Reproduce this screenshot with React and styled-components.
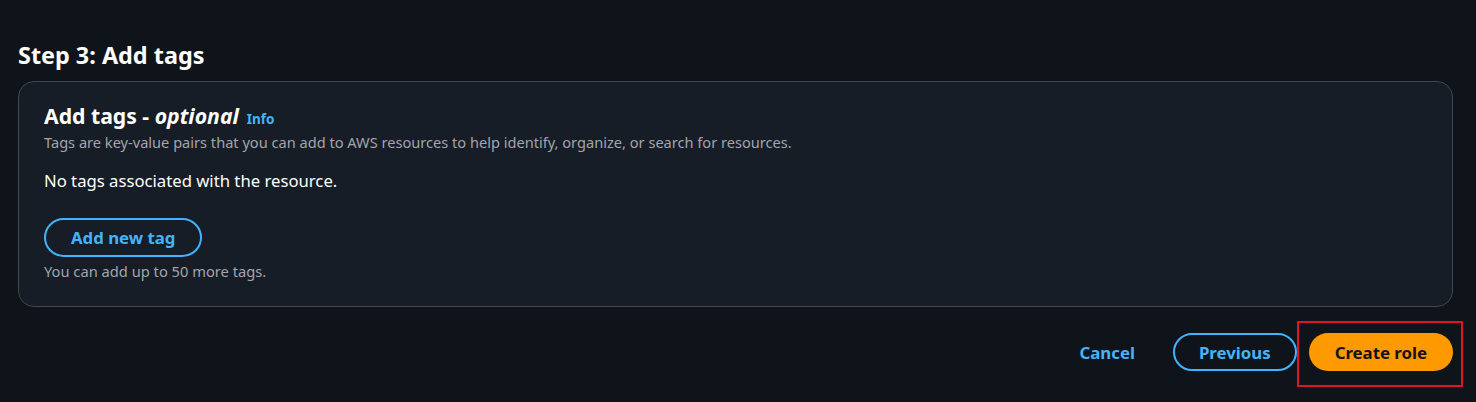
import React from "react";
import styled, { createGlobalStyle } from "styled-components";

const GlobalStyle = createGlobalStyle`
  html, body {
    margin: 0;
    padding: 0;
    background: #0f141a;
  }
  body {
    font-family: "Noto Sans", "Open Sans", Arial, sans-serif;
    color: #ffffff;
  }
`;

const Page = styled.div`
  width: 1476px;
  height: 402px;
  box-sizing: border-box;
  padding: 40px 23px 0 18px;
  background: #0f141a;
`;

const StepTitle = styled.h2`
  margin: 0 0 11px;
  font-size: 23.4px;
  line-height: 30px;
  font-weight: 700;
  color: #ffffff;
`;

const Card = styled.section`
  border: 1px solid #424650;
  border-radius: 16px;
  background: #161d26;
  padding: 20px 25px 25px;
`;

const CardHeader = styled.div`
  display: flex;
  align-items: baseline;
  gap: 8px;
`;

const CardTitle = styled.h3`
  margin: 0;
  font-size: 21.2px;
  line-height: 28px;
  font-weight: 700;
  color: #ffffff;

  em {
    font-style: italic;
  }
`;

const InfoLink = styled.a`
  font-size: 13.5px;
  font-weight: 700;
  color: #42b4ff;
  text-decoration: none;
`;

const Description = styled.p`
  margin: 3px 0 0;
  font-size: 14.6px;
  line-height: 18px;
  color: #a4a4ad;
`;

const EmptyText = styled.p`
  margin: 19px 0 0;
  font-size: 16.7px;
  line-height: 22px;
  color: #ffffff;
`;

const Button = styled.button`
  height: 38px;
  box-sizing: border-box;
  padding: 0 ${(p) => p.$pad || 24}px;
  border-radius: 20px;
  font-family: inherit;
  font-size: 16.8px;
  font-weight: 700;
  cursor: pointer;
  border: 2px solid ${(p) => (p.$variant === "normal" ? "#42b4ff" : "transparent")};
  background: ${(p) => (p.$variant === "primary" ? "#ff9900" : "transparent")};
  color: ${(p) => (p.$variant === "primary" ? "#0f141a" : "#42b4ff")};
`;

const AddButton = styled(Button)`
  margin-top: 26px;
  height: 39px;
`;

const Hint = styled.p`
  margin: 4px 0 0;
  font-size: 14.7px;
  line-height: 20px;
  color: #a4a4ad;
`;

const Actions = styled.div`
  display: flex;
  justify-content: flex-end;
  align-items: center;
  gap: 12px;
  margin-top: 26px;
`;

const Highlight = styled.span`
  position: relative;
  display: inline-flex;

  &::after {
    content: "";
    position: absolute;
    left: -12px;
    right: -10px;
    top: -12px;
    bottom: -16px;
    border: 2px solid #e0161e;
    pointer-events: none;
  }
`;

export default function App() {
  return (
    <Page>
      <GlobalStyle />
      <StepTitle>Step 3: Add tags</StepTitle>
      <Card>
        <CardHeader>
          <CardTitle>
            Add tags - <em>optional</em>
          </CardTitle>
          <InfoLink href="#">Info</InfoLink>
        </CardHeader>
        <Description>
          Tags are key-value pairs that you can add to AWS resources to help
          identify, organize, or search for resources.
        </Description>
        <EmptyText>No tags associated with the resource.</EmptyText>
        <AddButton $variant="normal" $pad={25}>Add new tag</AddButton>
        <Hint>You can add up to 50 more tags.</Hint>
      </Card>
      <Actions>
        <Button $variant="link">Cancel</Button>
        <Button $variant="normal">Previous</Button>
        <Highlight>
          <Button $variant="primary">Create role</Button>
        </Highlight>
      </Actions>
    </Page>
  );
}
